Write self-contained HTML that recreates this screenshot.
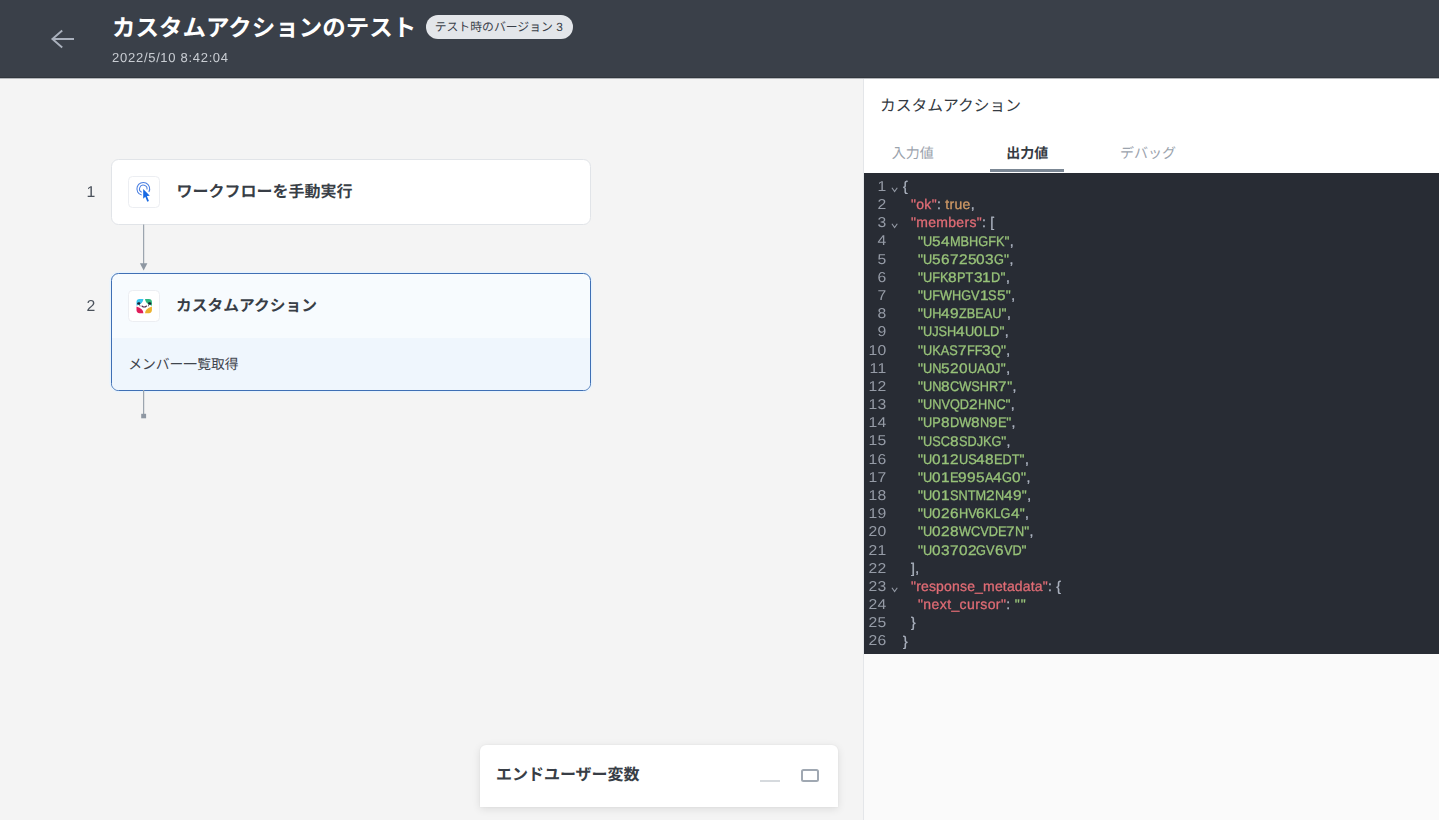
<!DOCTYPE html>
<html lang="ja"><head><meta charset="utf-8"><title>カスタムアクションのテスト</title><style>
*{box-sizing:border-box;margin:0;padding:0}
html,body{width:1439px;height:820px;overflow:hidden;background:#f4f4f4}
body{font-family:"Liberation Sans",sans-serif;position:relative;color:#343a42;text-rendering:geometricPrecision}
.abs{position:absolute}
.jp{position:absolute;overflow:hidden;white-space:nowrap}
.jp span{position:absolute;top:0;white-space:nowrap;font-family:"Liberation Sans","Noto Sans CJK JP",sans-serif}
#header{position:absolute;left:0;top:0;width:1439px;height:78px;background:#3a4049;border-bottom:1px solid #31363d;z-index:2}
#hline{position:absolute;left:0;top:78px;width:1439px;height:1px;background:#b4b7bb;z-index:2}
#canvas{position:absolute;left:0;top:78px;width:863px;height:742px;background:#f4f4f4;border-top:1px solid #f0f1f3}
#side{position:absolute;left:863px;top:78px;width:576px;height:742px;background:#fafafa;border-left:1px solid #e4e6e9}
#sidehead{position:absolute;left:0;top:0;width:575px;height:95.2px;background:#fff}
#editor{position:absolute;left:0;top:95.2px;width:575px;height:480.4px;background:#282c34;font-size:14px;line-height:18.2px;color:#abb2bf;letter-spacing:.3px}
.card{position:absolute;left:111.1px;width:480.2px;border-radius:7.5px;background:#fff;border:1.2px solid #e1e4e8}
.ico{position:absolute;width:32px;height:32px;border-radius:4.5px;background:#fff;border:1px solid #eceef2}
.num{position:absolute;font-size:15.8px;line-height:18px;color:#4a515b;width:20px;text-align:center}
.badge{position:absolute;left:426.1px;top:14.8px;width:147.4px;height:24.4px;border-radius:12.2px;background:#e3e6ea}
.date{position:absolute;left:111.5px;top:50.3px;font-size:13px;line-height:16px;letter-spacing:.76px;color:#c9cdd3;white-space:nowrap}
.date i{font-style:normal;letter-spacing:.55px}
.ln{position:absolute;left:0;width:22.82px;text-align:right;color:#959ba6;white-space:pre;letter-spacing:.41px;font-size:14.3px;transform:scaleX(1.1);transform-origin:100% 50%}
.cl{position:absolute;white-space:pre;-webkit-text-stroke:.3px}
.num,.date,.ln,.cl{will-change:transform}
.cl i{font-style:normal;letter-spacing:0;display:inline-block;width:8.85px;text-align:center;transform:scaleX(1.1)}
.cl b{font-weight:normal;letter-spacing:0;display:inline-block;transform:scaleX(.91);transform-origin:0 50%}
.k{color:#e06c75}.s{color:#98c379;letter-spacing:0}.s u{text-decoration:none;letter-spacing:.4px}.e{color:#98c379;letter-spacing:1.2px}.b{color:#d19a66}
</style></head><body>
<div id="header">
<svg class="abs" style="left:46px;top:25px" width="32" height="28" viewBox="0 0 32 28"><path d="M28 14H6.4M16.2 5.5L6.4 14L16.2 22.5" fill="none" stroke="#aab1bd" stroke-width="1.9"/></svg>
<div class="jp" style="left:108.05px;top:11.30px;width:313.50px;height:34.02px"><span style="font-size:23.5px;left:4px;line-height:34.02px;color:#ffffff;font-weight:700">カスタムアクションのテスト</span></div>
<div class="badge"></div>
<div class="jp" style="left:430.70px;top:19.46px;width:136.96px;height:17.42px"><span style="font-size:11.85px;left:4px;line-height:17.42px;color:#3a4049">テスト時のバージョン 3</span></div>
<div class="date">2022<i>/</i>5<i>/</i>10<i> </i>8<i>:</i>42<i>:</i>04</div>
</div><div id="hline"></div>
<div id="canvas"></div>
<div class="num" style="left:81px;top:183.6px">1</div>
<div class="num" style="left:81px;top:297.6px">2</div>
<div class="card" style="top:159px;height:65.6px"></div>
<div class="ico" style="left:128.2px;top:176.2px"></div>
<svg class="abs" style="left:128px;top:176px" width="32" height="32" viewBox="0 0 32 32">
<g fill="none" stroke="#4d81e2" stroke-width="1.05"><path d="M13.7 19.1A6.4 6.4 0 1 1 20.88 16.03"/><path d="M13.74 16.31A3.75 3.75 0 1 1 19 13.49"/></g>
<path d="M15.2 13.1V22.7L17.3 20.7L19.3 25.7L20.9 25L18.9 20.1L21.8 19.7Z" fill="#1769e3"/></svg>
<div class="jp" style="left:172.60px;top:181.50px;width:184.00px;height:22.40px"><span style="font-size:16px;left:4px;line-height:22.40px;color:#383e46;font-weight:700">ワークフローを手動実行</span></div>
<svg class="abs" style="left:136px;top:224px" width="16" height="50" viewBox="0 0 16 50"><path d="M7.6 0.5V40" stroke="#9ca5af" stroke-width="1.25" fill="none"/><path d="M3.9 39.2H11.4L7.65 46.6Z" fill="#8e97a2"/></svg>
<div class="card" style="top:273px;height:117.5px;border-color:#3f6fb4;background:#f7fbfe;overflow:hidden;box-shadow:0 0 0 1.5px #e8f3fd"><div class="abs" style="left:0;top:63.6px;width:100%;height:54px;background:#eff6fd"></div></div>
<div class="ico" style="left:128.2px;top:290.2px"></div>
<svg class="abs" style="left:128px;top:290px" width="32" height="32" viewBox="0 0 32 32">
<g transform="translate(8.5 9) scale(.97)">
<path d="M0 3.2A3.2 3.2 0 0 1 3.2 0H7.1Q7 4.6 0 6.9Z" fill="#36c5f0"/>
<path d="M15.9 3.2A3.2 3.2 0 0 0 12.7 0H8.8Q8.9 4.6 15.9 6.9Z" fill="#2eb67d"/>
<path d="M0 11.4A3.2 3.2 0 0 0 3.2 14.6H7.1Q7 10 0 7.7Z" fill="#e01e5a"/>
<path d="M15.9 11.4A3.2 3.2 0 0 1 12.7 14.6H8.8Q8.9 10 15.9 7.7Z" fill="#ecb22e"/>
<ellipse cx="2.3" cy="4.6" rx="1.75" ry="1.15" fill="#1b2030" transform="rotate(-12 2.3 4.6)"/>
<ellipse cx="13.6" cy="4.6" rx="1.75" ry="1.15" fill="#1b2030" transform="rotate(12 13.6 4.6)"/>
<path d="M3 5.3L3.6 7.2M12.9 5.3L12.3 7.2" stroke="#1b2030" stroke-width=".8" stroke-linecap="round" fill="none" opacity=".8"/>
<path d="M5.6 7.2Q7.95 9.3 10.3 7.2" fill="none" stroke="#4a2a52" stroke-width="1.1" stroke-linecap="round"/>
</g></svg>
<div class="jp" style="left:172.00px;top:294.84px;width:149.75px;height:23.04px"><span style="font-size:15.75px;left:4px;line-height:23.04px;color:#383e46;font-weight:700">カスタムアクション</span></div>
<div class="jp" style="left:124.20px;top:354.89px;width:118.40px;height:19.61px"><span style="font-size:13.8px;left:4px;line-height:19.61px;color:#3f454d">メンバー一覧取得</span></div>
<svg class="abs" style="left:136px;top:390px" width="16" height="30" viewBox="0 0 16 30"><path d="M7.6 0V24" stroke="#9ca5af" stroke-width="1.25" fill="none"/><rect x="5.2" y="23.8" width="4.9" height="4.5" fill="#8e97a2"/></svg>
<div class="abs" style="left:480px;top:744.5px;width:358px;height:62.3px;background:#fff;border-radius:6px 6px 0 0;box-shadow:0 2px 8px rgba(0,0,0,.10),0 0 2px rgba(0,0,0,.06)"></div>
<div class="jp" style="left:491.90px;top:764.88px;width:152.00px;height:22.85px"><span style="font-size:16px;left:4px;line-height:22.85px;color:#383e46;font-weight:700">エンドユーザー変数</span></div>
<div class="abs" style="left:760px;top:779.8px;width:20px;height:2px;background:#d6dade"></div>
<div class="abs" style="left:801.2px;top:769px;width:17.5px;height:12.6px;border:2px solid #a0a8b2;border-radius:2.5px"></div>
<div id="side"><div id="sidehead"></div>
<div class="abs" style="left:126px;top:90.8px;width:74px;height:3.4px;background:#7b8794"></div>
<div id="editor">
<div class="ln" style="top:4.75px">1</div>
<svg class="abs" style="left:26.5px;top:13.75px" width="8" height="6" viewBox="0 0 8 6"><path d="M.9 .8L3.6 4.5L6.3 .8" fill="none" stroke="#959ba6" stroke-width="1.1"/></svg>
<div class="cl" style="left:39.4px;top:3.85px">{</div>
<div class="ln" style="top:22.93px">2</div>
<div class="cl" style="left:46.5px;top:22.03px"><span class="k">"ok"</span>: <span class="b">true</span>,</div>
<div class="ln" style="top:41.11px">3</div>
<svg class="abs" style="left:26.5px;top:50.11px" width="8" height="6" viewBox="0 0 8 6"><path d="M.9 .8L3.6 4.5L6.3 .8" fill="none" stroke="#959ba6" stroke-width="1.1"/></svg>
<div class="cl" style="left:46.5px;top:40.21px"><span class="k">"members"</span>: [</div>
<div class="ln" style="top:59.29px">4</div>
<div class="cl" style="left:53.6px;top:58.39px"><span class="s">"<b style="margin-right:-0.91px">U</b><i>5</i><i>4</i><b style="margin-right:-5.39px">MBHGFK</b><u>"</u></span>,</div>
<div class="ln" style="top:77.47px">5</div>
<div class="cl" style="left:53.6px;top:76.57px"><span class="s">"<b style="margin-right:-0.91px">U</b><i>5</i><i>6</i><i>7</i><i>2</i><i>5</i><i>0</i><i>3</i><b style="margin-right:-0.98px">G</b><u>"</u></span>,</div>
<div class="ln" style="top:95.65px">6</div>
<div class="cl" style="left:53.6px;top:94.75px"><span class="s">"<b style="margin-right:-2.52px">UFK</b><i>8</i><b style="margin-right:-1.61px">PT</b><i>3</i><i>1</i><b style="margin-right:-0.91px">D</b><u>"</u></span>,</div>
<div class="ln" style="top:113.83px">7</div>
<div class="cl" style="left:53.6px;top:112.93px"><span class="s">"<b style="margin-right:-5.60px">UFWHGV</b><i>1</i><b style="margin-right:-0.84px">S</b><i>5</i><u>"</u></span>,</div>
<div class="ln" style="top:132.01px">8</div>
<div class="cl" style="left:53.6px;top:131.11px"><span class="s">"<b style="margin-right:-1.82px">UH</b><i>4</i><i>9</i><b style="margin-right:-4.20px">ZBEAU</b><u>"</u></span>,</div>
<div class="ln" style="top:150.19px">9</div>
<div class="cl" style="left:53.6px;top:149.29px"><span class="s">"<b style="margin-right:-3.29px">UJSH</b><i>4</i><b style="margin-right:-0.91px">U</b><i>0</i><b style="margin-right:-1.61px">LD</b><u>"</u></span>,</div>
<div class="ln" style="top:168.37px">10</div>
<div class="cl" style="left:53.6px;top:167.47px"><span class="s">"<b style="margin-right:-3.43px">UKAS</b><i>7</i><b style="margin-right:-1.54px">FF</b><i>3</i><b style="margin-right:-0.98px">Q</b><u>"</u></span>,</div>
<div class="ln" style="top:186.55px">11</div>
<div class="cl" style="left:53.6px;top:185.65px"><span class="s">"<b style="margin-right:-1.82px">UN</b><i>5</i><i>2</i><i>0</i><b style="margin-right:-1.75px">UA</b><i>0</i><b style="margin-right:-0.63px">J</b><u>"</u></span>,</div>
<div class="ln" style="top:204.73px">12</div>
<div class="cl" style="left:53.6px;top:203.83px"><span class="s">"<b style="margin-right:-1.82px">UN</b><i>8</i><b style="margin-right:-4.76px">CWSHR</b><i>7</i><u>"</u></span>,</div>
<div class="ln" style="top:222.91px">13</div>
<div class="cl" style="left:53.6px;top:222.01px"><span class="s">"<b style="margin-right:-4.55px">UNVQD</b><i>2</i><b style="margin-right:-2.73px">HNC</b><u>"</u></span>,</div>
<div class="ln" style="top:241.09px">14</div>
<div class="cl" style="left:53.6px;top:240.19px"><span class="s">"<b style="margin-right:-1.75px">UP</b><i>8</i><b style="margin-right:-2.10px">DW</b><i>8</i><b style="margin-right:-0.91px">N</b><i>9</i><b style="margin-right:-0.84px">E</b><u>"</u></span>,</div>
<div class="ln" style="top:259.27px">15</div>
<div class="cl" style="left:53.6px;top:258.37px"><span class="s">"<b style="margin-right:-2.66px">USC</b><i>8</i><b style="margin-right:-4.20px">SDJKG</b><u>"</u></span>,</div>
<div class="ln" style="top:277.45px">16</div>
<div class="cl" style="left:53.6px;top:276.55px"><span class="s">"<b style="margin-right:-0.91px">U</b><i>0</i><i>1</i><i>2</i><b style="margin-right:-1.75px">US</b><i>4</i><i>8</i><b style="margin-right:-2.52px">EDT</b><u>"</u></span>,</div>
<div class="ln" style="top:295.63px">17</div>
<div class="cl" style="left:53.6px;top:294.73px"><span class="s">"<b style="margin-right:-0.91px">U</b><i>0</i><i>1</i><b style="margin-right:-0.84px">E</b><i>9</i><i>9</i><i>5</i><b style="margin-right:-0.84px">A</b><i>4</i><b style="margin-right:-0.98px">G</b><i>0</i><u>"</u></span>,</div>
<div class="ln" style="top:313.81px">18</div>
<div class="cl" style="left:53.6px;top:312.91px"><span class="s">"<b style="margin-right:-0.91px">U</b><i>0</i><i>1</i><b style="margin-right:-3.57px">SNTM</b><i>2</i><b style="margin-right:-0.91px">N</b><i>4</i><i>9</i><u>"</u></span>,</div>
<div class="ln" style="top:331.99px">19</div>
<div class="cl" style="left:53.6px;top:331.09px"><span class="s">"<b style="margin-right:-0.91px">U</b><i>0</i><i>2</i><i>6</i><b style="margin-right:-1.75px">HV</b><i>6</i><b style="margin-right:-2.52px">KLG</b><i>4</i><u>"</u></span>,</div>
<div class="ln" style="top:350.17px">20</div>
<div class="cl" style="left:53.6px;top:349.27px"><span class="s">"<b style="margin-right:-0.91px">U</b><i>0</i><i>2</i><i>8</i><b style="margin-right:-4.69px">WCVDE</b><i>7</i><b style="margin-right:-0.91px">N</b><u>"</u></span>,</div>
<div class="ln" style="top:368.35px">21</div>
<div class="cl" style="left:53.6px;top:367.45px"><span class="s">"<b style="margin-right:-0.91px">U</b><i>0</i><i>3</i><i>7</i><i>0</i><i>2</i><b style="margin-right:-1.82px">GV</b><i>6</i><b style="margin-right:-1.75px">VD</b><u>"</u></span></div>
<div class="ln" style="top:386.53px">22</div>
<div class="cl" style="left:46.5px;top:385.63px">],</div>
<div class="ln" style="top:404.71px">23</div>
<svg class="abs" style="left:26.5px;top:413.71px" width="8" height="6" viewBox="0 0 8 6"><path d="M.9 .8L3.6 4.5L6.3 .8" fill="none" stroke="#959ba6" stroke-width="1.1"/></svg>
<div class="cl" style="left:46.5px;top:403.81px"><span class="k" style="letter-spacing:.17px">"response_metadata"</span>: {</div>
<div class="ln" style="top:422.89px">24</div>
<div class="cl" style="left:53.6px;top:421.99px"><span class="k" style="letter-spacing:.4px">"next_cursor"</span>: <span class="e">""</span></div>
<div class="ln" style="top:441.07px">25</div>
<div class="cl" style="left:46.5px;top:440.17px">}</div>
<div class="ln" style="top:459.25px">26</div>
<div class="cl" style="left:39.4px;top:458.35px">}</div>
</div></div>
<div class="jp" style="left:876.10px;top:96.32px;width:149.75px;height:22.93px"><span style="font-size:15.75px;left:4px;line-height:22.93px;color:#343a42">カスタムアクション</span></div>
<div class="jp" style="left:887.80px;top:143.50px;width:50.00px;height:19.60px"><span style="font-size:14px;left:4px;line-height:19.60px;color:#9ba3ad">入力値</span></div>
<div class="jp" style="left:1002.30px;top:143.50px;width:50.00px;height:19.60px"><span style="font-size:14px;left:4px;line-height:19.60px;color:#343a42;font-weight:700">出力値</span></div>
<div class="jp" style="left:1116.00px;top:143.08px;width:64.00px;height:20.19px"><span style="font-size:14px;left:4px;line-height:20.19px;color:#9ba3ad">デバッグ</span></div>
</body></html>
